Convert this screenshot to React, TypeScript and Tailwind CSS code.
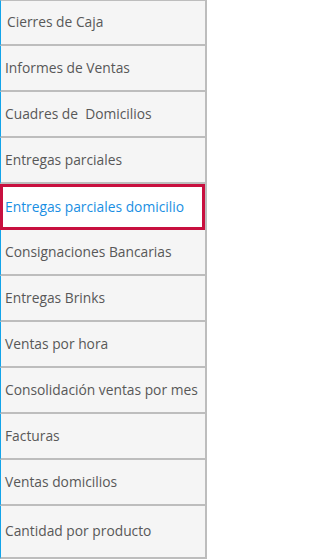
import React from "react";

const items = [
  "Cierres de Caja",
  "Informes de Ventas",
  "Cuadres de\u00a0 Domicilios",
  "Entregas parciales",
  "Entregas parciales domicilio",
  "Consignaciones Bancarias",
  "Entregas Brinks",
  "Ventas por hora",
  "Consolidación ventas por mes",
  "Facturas",
  "Ventas domicilios",
  "Cantidad por producto",
];

export default function App() {
  return (
    <div
      className="w-[207px] h-[559px] bg-[#f5f5f5] border-r-2 border-[#bdbdbd] flex flex-col text-[13.8px] text-[#585858]"
      style={{ fontFamily: '"Open Sans", "Noto Sans", sans-serif' }}
    >
      {items.map((label, i) => {
        if (i === 4) {
          return (
            <div
              key={i}
              className="h-[46px] shrink-0 bg-white border-[3px] border-[#c8103f] flex items-center pl-[2px] text-[#1a8fe3] whitespace-nowrap"
            >
              {label}
            </div>
          );
        }
        const first = i === 0;
        const last = i === items.length - 1;
        return (
          <div
            key={i}
            className={
              "shrink-0 border-l border-l-[#12a4ea] border-b-2 border-b-[#bdbdbd] flex items-center whitespace-nowrap " +
              (first ? "h-[46px] border-t border-t-[#bdbdbd] pl-[6px]" : "") +
              (last ? "h-[53px] pl-[4px]" : "") +
              (!first && !last ? "h-[46px] pl-[4px]" : "")
            }
          >
            {label}
          </div>
        );
      })}
    </div>
  );
}
